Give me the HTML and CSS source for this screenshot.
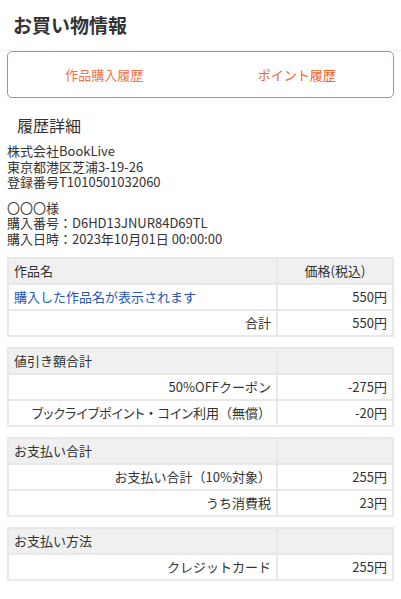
FILE: index.html
```html
<!DOCTYPE html>
<html lang="ja">
  <head>
    <meta charset="utf-8">
    <title>お買い物情報</title>
    <link rel="stylesheet" href="styles.css">
  </head>
  <body>
    <div class="page-head">
      <h1>お買い物情報</h1>
    </div>
    <div class="content">
      <ul class="tabs">
        <li class="tab tab-current">作品購入履歴</li>
        <li class="tab">ポイント履歴</li>
      </ul>

      <h2 class="section-title">履歴詳細</h2>

      <p class="info">
        株式会社BookLive<br>
        東京都港区芝浦3-19-26<br>
        登録番号T1010501032060
      </p>
      <p class="info">
        〇〇〇様<br>
        購入番号：D6HD13JNUR84D69TL<br>
        購入日時：2023年10月01日 00:00:00
      </p>

      <table class="detail">
        <tr>
          <th class="name">作品名</th>
          <th class="price">価格(税込)</th>
        </tr>
        <tr>
          <td class="name"><a href="#">購入した作品名が表示されます</a></td>
          <td class="num">550円</td>
        </tr>
        <tr>
          <td class="label">合計</td>
          <td class="num">550円</td>
        </tr>
      </table>

      <table class="detail">
        <tr>
          <th class="name">値引き額合計</th>
          <th class="price"></th>
        </tr>
        <tr>
          <td class="label">50%OFFクーポン</td>
          <td class="num">-275円</td>
        </tr>
        <tr>
          <td class="label"><span class="prop">ブックライブポイント</span>・<span class="prop">コイン</span>利用（無償）</td>
          <td class="num">-20円</td>
        </tr>
      </table>

      <table class="detail">
        <tr>
          <th class="name">お支払い合計</th>
          <th class="price"></th>
        </tr>
        <tr>
          <td class="label">お支払い合計（10%対象）</td>
          <td class="num">255円</td>
        </tr>
        <tr>
          <td class="label">うち消費税</td>
          <td class="num">23円</td>
        </tr>
      </table>

      <table class="detail">
        <tr>
          <th class="name">お支払い方法</th>
          <th class="price"></th>
        </tr>
        <tr>
          <td class="label">クレジットカード</td>
          <td class="num">255円</td>
        </tr>
      </table>
    </div>
  </body>
</html>
```

FILE: styles.css
```css
body {
  font-family: "Noto Sans CJK JP", "Noto Sans", sans-serif;
  font-size: 13px;
  color: #333;
  margin: 0;
  padding: 0;
  background: #fff;
}
.page-head {
  height: 50px;
  border-bottom: 1px solid #f2f2f2;
  display: flex;
  align-items: center;
  padding: 0 13px;
}
.page-head h1 {
  margin: 0;
  font-size: 19px;
  font-weight: bold;
  color: #333;
  line-height: 24px;
}
.content {
  padding: 0 7px;
}
ul.tabs {
  display: flex;
  margin: 0;
  padding: 0;
  list-style: none;
  height: 45px;
  border: 1px solid #f37a42;
  border-radius: 5px;
}
ul.tabs li {
  flex: 1;
  display: flex;
  align-items: center;
  justify-content: center;
  color: #f0622a;
  line-height: 16px;
}
ul.tabs li.tab-current {
  color: #f27248;
}
h2.section-title {
  margin: 18px 0 0 0;
  padding-left: 10px;
  font-size: 16px;
  font-weight: normal;
  line-height: 19px;
  color: #333;
}
p.info {
  margin: 8px 0 0 0;
  line-height: 15.6px;
}
p.info + p.info {
  margin-top: 10px;
}
table.detail {
  width: 100%;
  border-collapse: collapse;
  margin-top: 10px;
}
table.detail th,
table.detail td {
  border: 2px solid #e8e8e8;
  padding: 4px 5px;
  line-height: 16px;
  font-weight: normal;
}
table.detail th {
  background: #f0f0f0;
}
table.detail th.name {
  text-align: left;
}
table.detail th.price {
  width: 104px;
  text-align: center;
}
table.detail td.label,
table.detail td.num {
  text-align: right;
}
table.detail .prop {
  font-feature-settings: "palt";
}
table.detail td a {
  color: #2456b4;
  text-decoration: none;
}
```
